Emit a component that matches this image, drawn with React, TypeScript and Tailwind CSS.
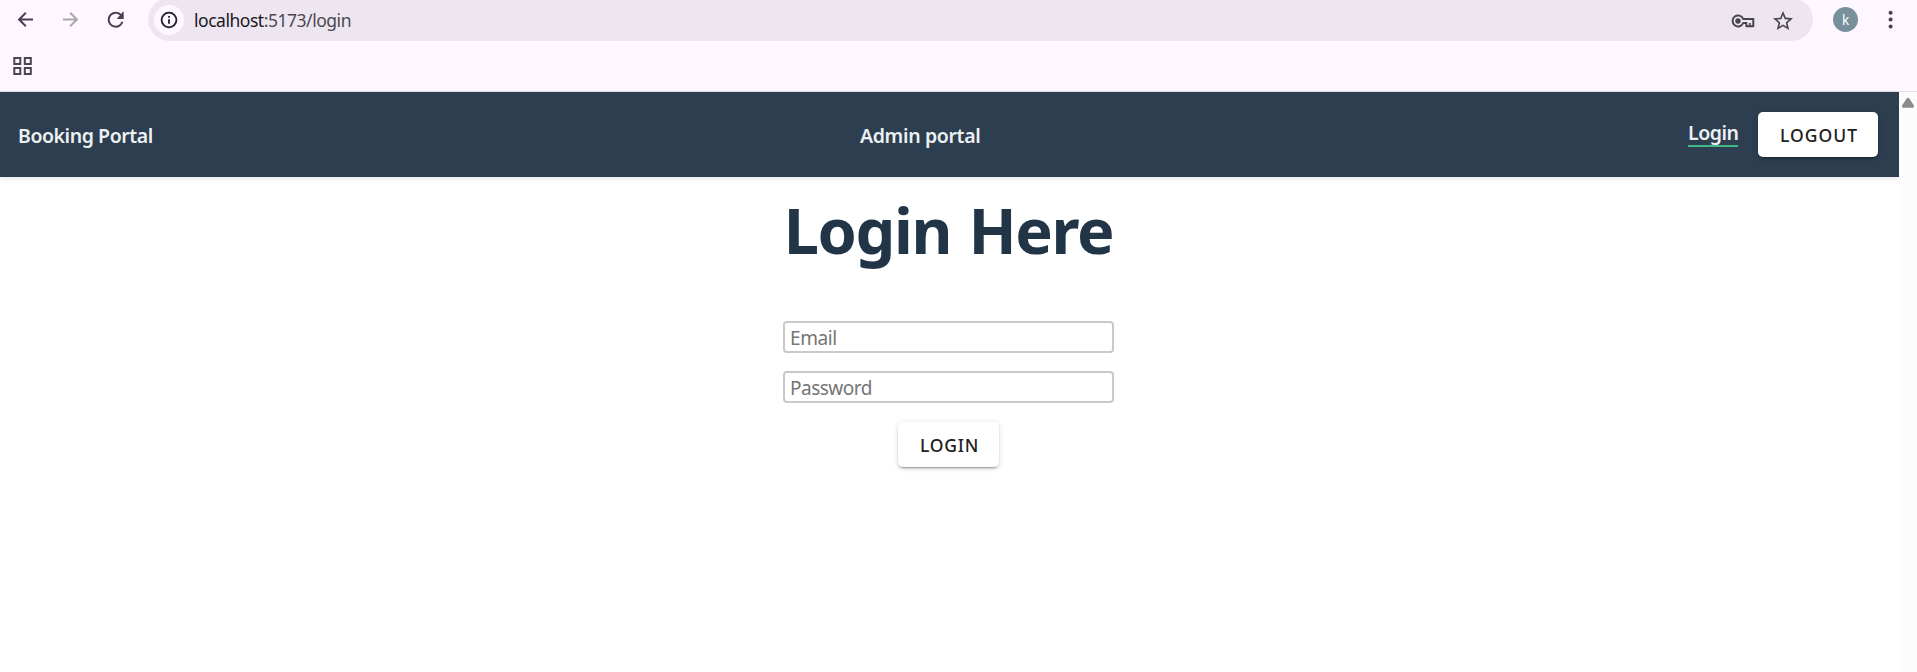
import React from "react";

function Toolbar() {
  return (
    <div className="flex h-[41px] items-start">
      <div className="flex w-[148px] shrink-0 pl-[15px] pt-[9px] text-[#493f55]">
        <svg width="22" height="21" viewBox="0 0 22 21" fill="none" stroke="currentColor" strokeWidth="2">
          <path d="M18 10.5H4.5M10.8 3.8L4.1 10.5l6.7 6.7" />
        </svg>
        <svg className="ml-[23px] text-[#aaa5ac]" width="22" height="21" viewBox="0 0 22 21" fill="none" stroke="currentColor" strokeWidth="2">
          <path d="M3 10.5h13.5M10.2 3.8l6.7 6.7-6.7 6.7" />
        </svg>
        <svg className="ml-[23px]" width="22" height="21" viewBox="1.3 1.3 22 21" fill="currentColor">
          <path d="M17.65 6.35A7.96 7.96 0 0 0 12 4a8 8 0 1 0 7.73 10h-2.08A6 6 0 1 1 12 6c1.66 0 3.14.69 4.22 1.78L13.6 10.2V11.2H20V4h-1z" />
        </svg>
      </div>
      <div className="-mt-[2px] flex h-[43px] w-[1665px] shrink-0 items-center rounded-[21.5px] bg-[#ede6f0] pl-[6px] pr-[20px]">
        <div className="mt-[1px] flex size-[30px] items-center justify-center rounded-full bg-[#fef7ff]">
          <svg width="18" height="18" viewBox="0 0 18 18" fill="none" stroke="#1f1b22" strokeWidth="1.8">
            <circle cx="9" cy="9" r="7.4" />
            <path d="M9 8.2v4.6M9 4.9v1.8" />
          </svg>
        </div>
        <div className="ml-[10px] text-[17.5px] leading-6 tracking-[-0.47px] text-[#4e4752]">
          <span className="text-[#1b171e]">localhost</span>:5173/login
        </div>
        <svg className="ml-auto mt-[3px]" width="24" height="14" viewBox="0 0 24 14" fill="none" stroke="#4a4350" strokeWidth="2">
          <path d="M12.2 4.9A5.5 5.5 0 1 0 12.2 9h3.2v3.3h6.9V4.9z" strokeLinejoin="round" />
          <path d="M18.9 9v3.3" strokeWidth="1.7" />
          <circle cx="7" cy="7" r="2.7" fill="#4a4350" stroke="none" />
        </svg>
        <svg className="ml-[18px] mt-[2px]" width="20" height="20" viewBox="2 2 20 20" fill="#4a4350">
          <path d="M22 9.24l-7.19-.62L12 2 9.19 8.63 2 9.24l5.46 4.73L5.82 21 12 17.27 18.18 21l-1.63-7.03L22 9.24zM12 15.4l-3.76 2.27 1-4.28-3.32-2.88 4.38-.38L12 6.1l1.71 4.04 4.38.38-3.32 2.88 1 4.28L12 15.4z" />
        </svg>
      </div>
      <div className="ml-5 mt-[7px] flex size-[25px] items-center justify-center rounded-full bg-[#78909c] pt-[2px] text-[13.5px] leading-none text-white">k</div>
      <svg className="ml-[28px] mt-[10px]" width="9" height="20" viewBox="0 0 9 20" fill="#493f55">
        <circle cx="4.6" cy="2.8" r="2" />
        <circle cx="4.6" cy="9.6" r="2" />
        <circle cx="4.6" cy="16.4" r="2" />
      </svg>
    </div>
  );
}

function Browser() {
  return (
    <div className="h-[92px] border-b border-[#e6dcea] bg-[#fef7ff]">
      <Toolbar />
      <div className="pl-[13px] pt-[16px]">
        <svg width="19" height="18" viewBox="0 0 19 18" fill="none" stroke="#4b4550" strokeWidth="2">
          <path d="M1.3 1h6v6h-6zM11.8 1h6v6h-6zM1.3 11h6v6h-6zM11.8 11h6v6h-6z" />
        </svg>
      </div>
    </div>
  );
}

const button =
  "flex h-[45px] items-center justify-center rounded-[5px] bg-white pt-[1px] pl-[2px] text-[17.5px] leading-6 font-medium text-[#212121] shadow-[0_4px_1px_-3px_rgba(0,0,0,0.2),0_2px_2px_0_rgba(0,0,0,0.14),0_1px_6px_0_rgba(0,0,0,0.12)]";

function Header() {
  return (
    <header className="flex h-[85px] items-center bg-[#2c3e50] pl-[18px] pr-[21px] text-[19.5px] leading-7 font-semibold text-[#ecf0f1] shadow-[0_2px_5px_rgba(0,0,0,0.1)]">
      <div className="mt-[2px] w-[842px] tracking-[-0.44px]">Booking Portal</div>
      <div className="mt-[2px] tracking-[-0.35px]">Admin portal</div>
      <div className="ml-auto flex items-center gap-5">
        <a className="flex h-[25px] w-[50px] items-end border-b-2 border-[#42b983] leading-[25px] tracking-[-0.45px]">Login</a>
        <button className={`${button} w-[120px] tracking-[1.04px]`}>LOGOUT</button>
      </div>
    </header>
  );
}

function LoginForm() {
  return (
    <main className="flex flex-col items-center pr-[2px]">
      <h1 className="mt-[17px] h-[72px] text-[63px] leading-[72px] font-bold tracking-[-1.4px] whitespace-nowrap text-[#213547] [word-spacing:2.5px]">
        Login Here
      </h1>
      <form className="mt-[55px] flex flex-col items-center">
        <input
          className="h-8 w-[331px] rounded-[4px] border-2 border-[#cdc7c9] px-[5px] pt-[2px] text-[19px] tracking-[-0.4px] placeholder:text-[#757575]"
          placeholder="Email"
        />
        <input
          className="mt-[18px] h-8 w-[331px] rounded-[4px] border-2 border-[#cdc7c9] px-[5px] pt-[2px] text-[19px] tracking-[-0.5px] placeholder:text-[#757575]"
          placeholder="Password"
        />
        <button type="button" className={`${button} mt-[19px] w-[101px] tracking-[0.8px]`}>LOGIN</button>
      </form>
    </main>
  );
}

export default function App() {
  return (
    <div className="flex h-[672px] w-[1917px] flex-col overflow-hidden bg-white font-['Noto_Sans',sans-serif]">
      <Browser />
      <div className="flex flex-1">
        <div className="w-[1899px]">
          <Header />
          <LoginForm />
        </div>
        <div className="flex w-[18px] justify-center bg-[#fcfcfc] pt-[5px]">
          <svg width="14" height="12" viewBox="0 0 14 12" fill="#8b8b8b">
            <path d="M5.8 1.3Q7 .2 8.2 1.3L12.9 8.6Q13.4 10.7 11.8 10.8H2.2Q.6 10.7 1.1 8.6z" />
          </svg>
        </div>
      </div>
    </div>
  );
}
